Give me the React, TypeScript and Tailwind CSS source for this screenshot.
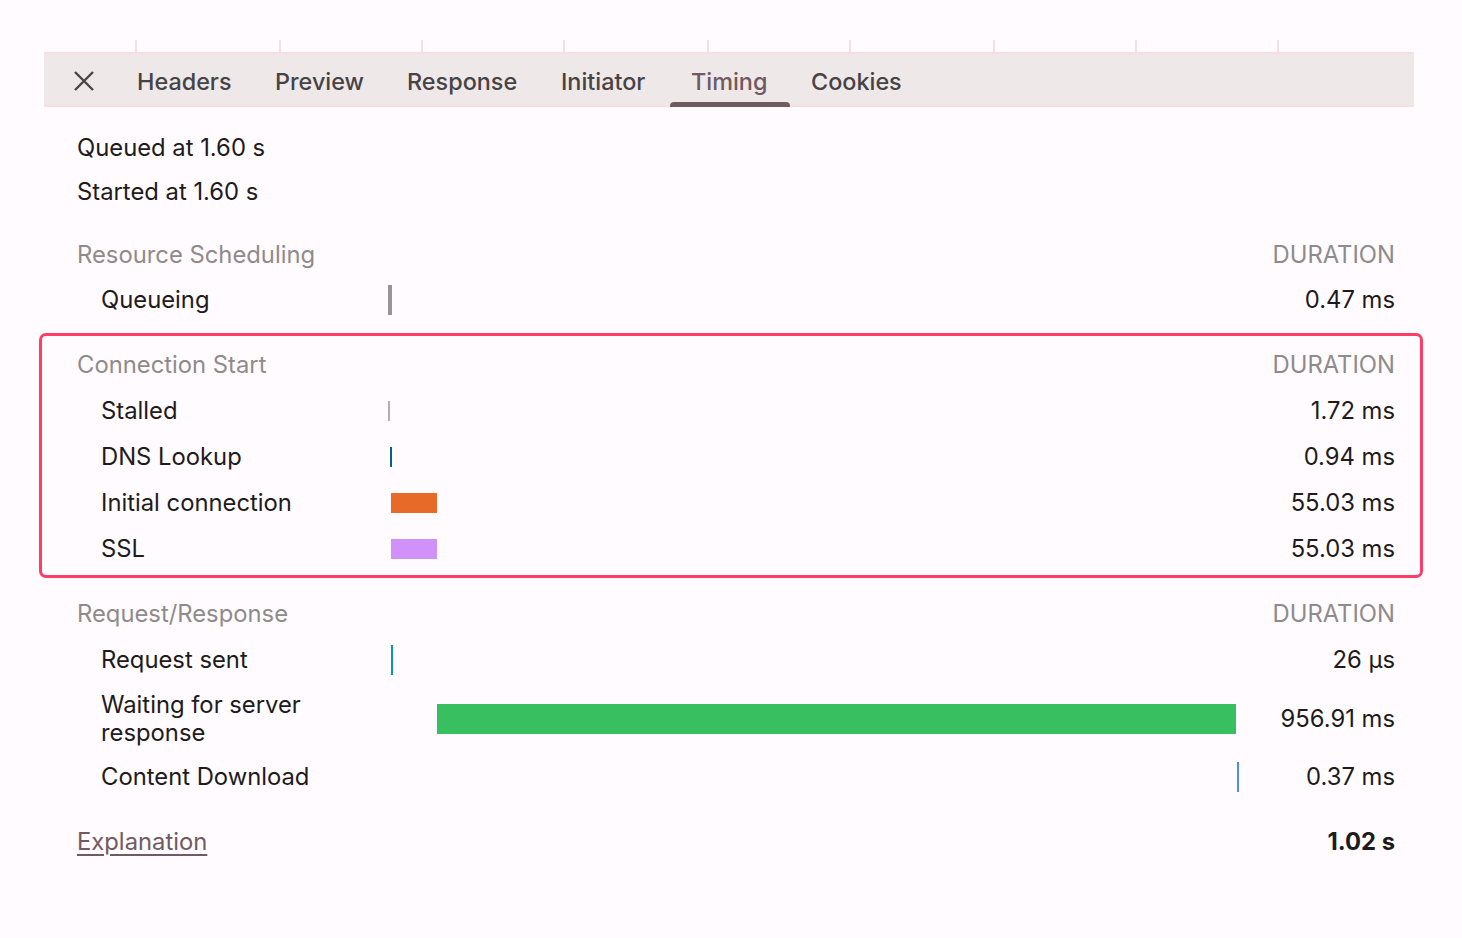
import React from "react";

type Row = { label: string; value: string; left: number; width: number; color: string; h: number; rowH?: number };

const tabs: { name: string; w: string }[] = [
  { name: "Headers", w: "w-[138px]" },
  { name: "Preview", w: "w-[132px]" },
  { name: "Response", w: "w-[154px]" },
  { name: "Initiator", w: "w-[130px]" },
  { name: "Timing", w: "w-[120px]" },
  { name: "Cookies", w: "w-[133px]" },
];
const ticks = [135, 279, 421, 563, 707, 849, 993, 1135, 1277];

function Bar({ r }: { r: Row }) {
  return (
    <div className="relative h-full w-[850px] shrink-0">
      <div
        className="absolute top-1/2 -translate-y-1/2"
        style={{ left: r.left, width: r.width, height: r.h, background: r.color }}
      />
    </div>
  );
}

function DataRow({ r }: { r: Row }) {
  return (
    <div className="flex items-center pl-[57px] pr-[19px]" style={{ height: r.rowH ?? 46 }}>
      <div className="w-[287px] shrink-0 pr-[50px] leading-[28px] text-[#1d1b1c]">{r.label}</div>
      <Bar r={r} />
      <div className="flex-1 text-right text-[#1d1b1c]">{r.value}</div>
    </div>
  );
}

function SectionHeader({ title, h = 46 }: { title: string; h?: number }) {
  return (
    <div className="flex items-center justify-between pl-[33px] pr-[19px] text-[#8f8b8c]" style={{ height: h }}>
      <span>{title}</span>
      <span>DURATION</span>
    </div>
  );
}

export default function App() {
  return (
    <div className="min-h-screen bg-[#fffbfe] font-['Inter',sans-serif] text-[23.8px]">
      <div className="ml-[44px] w-[1370px] pt-[40px]">
        <div className="relative h-[12px]">
          {ticks.map((x) => (
            <div key={x} className="absolute top-0 h-[12px] w-[2px] bg-[#f6dfe2]" style={{ left: x - 44 }} />
          ))}
        </div>
        <div className="flex h-[55px] items-stretch border-y-2 border-[#f8dde1] bg-[#eee8e9]">
          <div className="flex w-[72px] items-center pl-[30px] pt-[2px] text-[#474545]">
            <svg width="20" height="20" viewBox="0 0 20 20" fill="none" stroke="currentColor" strokeWidth="2.4" strokeLinecap="butt">
              <path d="M1 1 L19 19 M19 1 L1 19" />
            </svg>
          </div>
          {tabs.map((t) => (
            <div
              key={t.name}
              className={
                "relative flex items-center whitespace-nowrap pl-[21px] pt-[5px] text-[23.4px] font-medium " +
                t.w +
                " " +
                (t.name === "Timing" ? "text-[#6e5a60]" : "text-[#474345]")
              }
            >
              {t.name}
              {t.name === "Timing" && (
                <div className="absolute bottom-[-2px] left-0 right-0 h-[5px] rounded-t-[4px] bg-[#6f5b60]" />
              )}
            </div>
          ))}
        </div>

        <div className="pt-[18px] text-[#1d1b1c]">
          <div className="flex h-[44px] items-center pl-[33px] pt-[1px]">Queued at 1.60 s</div>
          <div className="flex h-[44px] items-center pl-[33px] pt-[1px]">Started at 1.60 s</div>
        </div>

        <div className="mt-[19px]">
          <SectionHeader title="Resource Scheduling" h={45} />
          <DataRow r={{ label: "Queueing", value: "0.47 ms", left: 0, width: 4, color: "#989595", h: 30 }} />
        </div>

        <div className="mt-[10px] -ml-[5px] -mr-[9px] rounded-[7px] border-[3px] border-[#fe3d66] pl-[2px] pr-[6px] pt-[6px] pb-[3px]">
          <SectionHeader title="Connection Start" />
          <DataRow r={{ label: "Stalled", value: "1.72 ms", left: 0, width: 2, color: "#b3afaf", h: 20 }} />
          <DataRow r={{ label: "DNS Lookup", value: "0.94 ms", left: 2, width: 2, color: "#006680", h: 20 }} />
          <DataRow r={{ label: "Initial connection", value: "55.03 ms", left: 3, width: 46, color: "#e86a29", h: 20 }} />
          <DataRow r={{ label: "SSL", value: "55.03 ms", left: 3, width: 46, color: "#d191fb", h: 20 }} />
        </div>

        <div className="mt-[13px]">
          <SectionHeader title="Request/Response" />
          <DataRow r={{ label: "Request sent", value: "26 µs", left: 3, width: 2, color: "#0097c4", h: 30 }} />
          <DataRow r={{ label: "Waiting for server response", value: "956.91 ms", left: 49, width: 799, color: "#38bf5f", h: 30, rowH: 71 }} />
          <DataRow r={{ label: "Content Download", value: "0.37 ms", left: 849, width: 2, color: "#4a8cf5", h: 30 }} />
        </div>

        <div className="mt-[19px] flex h-[46px] items-center justify-between pl-[33px] pr-[19px]">
          <a href="#" className="text-[#725a61] underline decoration-[2px] underline-offset-[4px]">Explanation</a>
          <span className="font-bold text-[#1d1b1c]">1.02 s</span>
        </div>
      </div>
    </div>
  );
}
